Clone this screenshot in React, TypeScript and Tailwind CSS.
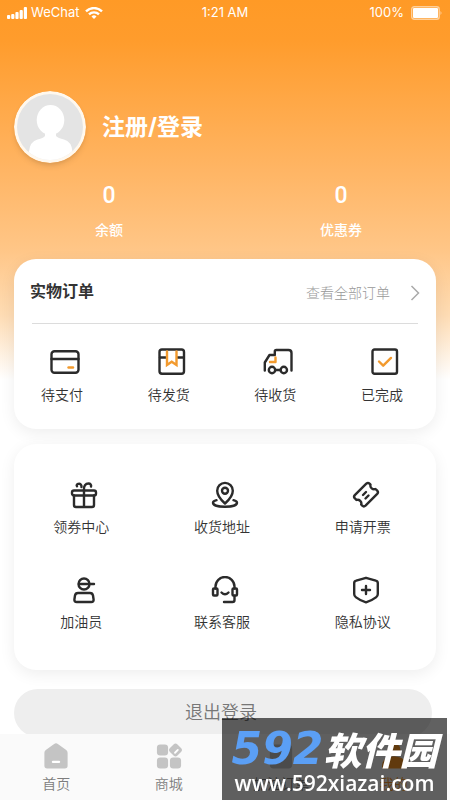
import type { ReactNode } from "react";

type Item = { label: string; icon: ReactNode };

function Svg({ children, size = 28 }: { children: ReactNode; size?: number }) {
  return (
    <svg
      width={size}
      height={size}
      viewBox={`0 0 ${size} ${size}`}
      fill="none"
      stroke="#2b2b2b"
      strokeWidth="2.4"
      strokeLinecap="round"
      strokeLinejoin="round"
      aria-hidden="true"
    >
      {children}
    </svg>
  );
}

const orders: Item[] = [
  {
    label: "待支付",
    icon: (
      <Svg size={30}>
        <rect x="1.5" y="4.2" width="27" height="21.5" rx="3" />
        <path d="M1.5 12h27" />
        <path d="M18.5 20.5h4.5" stroke="#f29a2e" />
      </Svg>
    ),
  },
  {
    label: "待发货",
    icon: (
      <Svg size={30}>
        <rect x="2.5" y="2.5" width="24.5" height="24.2" rx="2.5" />
        <path d="M3 10.500h6M20.500 10.500h6" />
        <path d="M10 4.500v13.500l4.700-3.300 4.800 3.300V4.500" stroke="#f29a2e" strokeLinejoin="miter" />
      </Svg>
    ),
  },
  {
    label: "待收货",
    icon: (
      <Svg size={30}>
        <path d="M1.800 23.500v-8L6.500 8h5.300V4.500q0-1.500 1.500-1.500h12.200q3 0 3 3v17.500" />
        <path d="M12.500 10.500v4.500H7" stroke="#f29a2e" />
        <circle cx="9" cy="23" r="3.200" />
        <circle cx="20.800" cy="23" r="3.200" />
        <path d="M12.500 23h5" />
      </Svg>
    ),
  },
  {
    label: "已完成",
    icon: (
      <Svg size={30}>
        <rect x="2.500" y="2.500" width="24.500" height="24.200" rx="2" />
        <path d="m9 14.500 4.200 4.200 7.800-7.800" stroke="#f29a2e" />
      </Svg>
    ),
  },
];

const services: Item[] = [
  {
    label: "领券中心",
    icon: (
      <Svg>
        <rect x="2" y="9.500" width="24" height="5" rx="2" />
        <path d="M4 14.500v9.500q0 2 2 2h16q2 0 2-2v-9.500M14 9.500V26M14 9c-.5-4 1.500-6.500 4.500-6.500 2 0 3 1.500 2.500 3M11.500 6c.2-2-1.200-3.500-2.800-3.300C7 2.800 6.200 4.200 7 5.300" />
      </Svg>
    ),
  },
  {
    label: "收货地址",
    icon: (
      <Svg>
        <path d="M14 22.500C9.500 18.500 6.200 14.500 6.200 9.700a7.800 7.800 0 0 1 15.600 0c0 4.800-3.300 8.800-7.800 12.800Z" />
        <circle cx="14" cy="9.700" r="3" />
        <path d="M5.500 19.200C3.300 19.800 2 20.700 2 21.800c0 2.300 5 4 12 4s12-1.700 12-4c0-1.100-1.300-2-3.500-2.600" />
      </Svg>
    ),
  },
  {
    label: "申请开票",
    icon: (
      <Svg>
        <path d="M14.300 2.700q1.700-1.500 3.200 0l1 1c-.8 2.800 2.300 5.500 5 4.300l1.700 1.700q1.500 1.500 0 3.200L13.500 24.700q-1.700 1.500-3.200 0L9.200 23.500c.9-2.700-2-5.700-4.800-4.500l-1.600-1.700q-1.500-1.500 0-3.200Z" />
        <path d="m11 14 3-3M13.500 17.500l3-3" />
      </Svg>
    ),
  },
  {
    label: "加油员",
    icon: (
      <Svg>
        <circle cx="14" cy="8" r="5.500" />
        <path d="M9 8h15" />
        <path d="M8 17h12q2.500 0 3 2.500l.6 4q.2 2.500-2.300 2.500H6.700q-2.500 0-2.300-2.500l.6-4q.5-2.500 3-2.500Z" />
      </Svg>
    ),
  },
  {
    label: "联系客服",
    icon: (
      <Svg>
        <path d="M4.500 12.500V10.500a9.500 9.500 0 0 1 19 0v2" />
        <rect x="2" y="12.500" width="4.500" height="7" rx="1" />
        <rect x="21.500" y="12.500" width="4.500" height="7" rx="1" />
        <path d="M10.500 16.500q3.500 3.500 7 0M23.500 20v4q0 2-2 2H13" />
      </Svg>
    ),
  },
  {
    label: "隐私协议",
    icon: (
      <Svg>
        <path d="m14 1.800 9.800 2.800q2 .5 2 2.500v11q0 2-1.500 3-4.500 3.500-10.300 5.200-5.800-1.700-10.300-5.200-1.500-1-1.500-3v-11q0-2 2-2.500Z" />
        <path d="M14 10v8M10 14h8" />
      </Svg>
    ),
  },
];

const tabs = [
  {
    label: "首页",
    color: "text-[#7d7d7d]",
    icon: (
      <>
        <path d="M12 1.500q2-1.500 4 0l9 6.500q1.500 1 1.500 3v14q0 3-3 3h-19q-3 0-3-3V11q0-2 1.500-3Z" fill="#c4c4c4" />
        <rect x="9.500" y="19.500" width="9" height="2.600" rx="1.200" fill="#fff" />
      </>
    ),
  },
  {
    label: "商城",
    color: "text-[#7d7d7d]",
    icon: (
      <g fill="#c4c4c4">
        <rect x="1" y="2" width="12" height="12" rx="3.500" />
        <rect x="1" y="16" width="12" height="12" rx="3.500" />
        <rect x="15" y="16" width="12" height="12" rx="3.500" />
        <rect x="15.300" y="2.300" width="11.400" height="11.400" rx="3" transform="rotate(45 21 8)" />
        <path d="m20.500 11 3-3" stroke="#fff" strokeWidth="2" strokeLinecap="round" />
      </g>
    ),
  },
  {
    label: "加油订单",
    color: "text-[#7d7d7d]",
    icon: <rect x="2" y="2" width="24" height="26" rx="4" fill="#c4c4c4" />,
  },
  {
    label: "我的",
    color: "text-[#ff9a26]",
    icon: (
      <g fill="#ff9a26">
        <circle cx="14" cy="8" r="7" />
        <path d="M3 28q-2 0-2-2c0-7 4-11 13-11s13 4 13 11q0 2-2 2Z" />
      </g>
    ),
  },
];

function Entry({ item }: { item: Item }) {
  return (
    <button type="button" className="flex flex-col items-center">
      {item.icon}
      <span className="pt-2 pr-1.5 text-sm leading-5 font-[350] text-[#333]">{item.label}</span>
    </button>
  );
}

function StatusBar() {
  return (
    <header className="grid h-[26px] grid-cols-3 items-center px-[7px] text-[13px] text-white">
      <div className="flex items-center gap-1">
        <svg width="20" height="12" viewBox="0 0 20 12" fill="#fff" aria-hidden="true">
          <rect x="0" y="8" width="3.200" height="4" rx="1" />
          <rect x="4.200" y="7" width="3.200" height="5" rx="1" />
          <rect x="8.400" y="5" width="3.200" height="7" rx="1" />
          <rect x="12.600" y="3" width="3.200" height="9" rx="1" />
          <rect x="16.800" y="0" width="3.200" height="12" rx="1" />
        </svg>
        <span>WeChat</span>
        <svg className="ml-0.5" width="18" height="12" viewBox="0 0 18 12" fill="none" stroke="#fff" strokeWidth="2.400" aria-hidden="true">
          <path d="M1 4.300a11.500 11.500 0 0 1 16 0M4 7.400a7.200 7.200 0 0 1 10 0" />
          <path d="M6.500 9.500a3.700 3.700 0 0 1 5 0L9 12Z" fill="#fff" stroke="none" />
        </svg>
      </div>
      <span className="text-center">1:21 AM</span>
      <div className="flex items-center justify-end gap-[7px]">
        <span>100%</span>
        <svg width="32" height="14" viewBox="0 0 32 14" aria-hidden="true">
          <rect x=".7" y=".7" width="27.500" height="12.600" rx="2.500" fill="none" stroke="#ffd09a" strokeWidth="1.400" />
          <rect x="2" y="2" width="25" height="10" rx="1" fill="#fff" />
          <path d="M29.500 5q2 2 0 4Z" fill="#ffd09a" />
        </svg>
      </div>
    </header>
  );
}

function Avatar() {
  return (
    <svg className="rounded-full shadow-md" width="72" height="72" viewBox="0 0 72 72" aria-hidden="true">
      <defs>
        <clipPath id="face">
          <circle cx="36" cy="36" r="33" />
        </clipPath>
      </defs>
      <circle cx="36" cy="36" r="36" fill="#fff8ee" />
      <g clipPath="url(#face)">
        <path d="M0 0h72v72H0z" fill="#e4e4e4" />
        <path d="M31 38h11v7q2 2 8 3.500 7.500 2 8.500 12V72H15V60.500q1-10 8.500-12 6-1.500 7.500-3.500Z" fill="#fff" />
        <ellipse cx="36.500" cy="29" rx="13.800" ry="15" fill="#fff" />
      </g>
    </svg>
  );
}

function Stat({ value, label }: { value: string; label: string }) {
  return (
    <div className="flex flex-col items-center">
      <span className="font-[Roboto] text-[23px] leading-[30px] font-medium">{value}</span>
      <span className="mt-[7px] text-sm leading-6 font-medium">{label}</span>
    </div>
  );
}

export default function App() {
  return (
    <div className="min-h-screen overflow-hidden bg-[linear-gradient(#ff9a26_0px,#ff9c2c_40px,#ffb564_170px,#ffc687_250px,#fedcb4_315px,#ffffff_380px)] pb-16 font-[Inter,'Noto_Sans_CJK_SC',sans-serif]">
      <StatusBar />

      <section className="px-3.5 pt-[65px] text-white">
        <a href="#login" className="flex items-center gap-4">
          <Avatar />
          <span className="text-[23px] font-bold">注册/登录</span>
        </a>
        <div className="mt-[18px] flex justify-between pr-[74px] pl-[81px]">
          <Stat value="0" label="余额" />
          <Stat value="0" label="优惠券" />
        </div>
      </section>

      <main className="px-3.5 pt-[17px]">
        <section className="rounded-[22px] bg-white px-4 pb-6 shadow-[0_4px_16px_rgba(0,0,0,0.07)]">
          <div className="flex h-16 items-center justify-between">
            <h2 className="text-base font-bold text-[#333]">实物订单</h2>
            <a href="#orders" className="flex items-center gap-5 pt-1 text-sm font-light text-[#999]">
              查看全部订单
              <svg width="10" height="16" viewBox="0 0 10 16" fill="none" stroke="#aaa" strokeWidth="1.500" aria-hidden="true">
                <path d="m1.500 1 7 7-7 7" />
              </svg>
            </a>
          </div>
          <hr className="mx-0.5 border-[#dcdcdc]" />
          <div className="flex justify-between px-[11px] pt-[23px]">
            {orders.map((item) => (
              <Entry key={item.label} item={item} />
            ))}
          </div>
        </section>

        <section className="mt-[15px] grid grid-cols-3 gap-y-[39px] rounded-[22px] bg-white pt-[37px] pb-[38px] shadow-[0_4px_16px_rgba(0,0,0,0.07)]">
          {services.map((item) => (
            <Entry key={item.label} item={item} />
          ))}
        </section>

        <div className="mt-[19px] pr-1">
          <button type="button" className="h-12 w-full rounded-full bg-[#eee] pr-1 text-lg font-[350] text-[#777]">
            退出登录
          </button>
        </div>
      </main>

      <nav className="fixed inset-x-0 bottom-0 grid h-[66px] grid-cols-4 bg-[#fafafa]">
        {tabs.map((tab) => (
          <a
            key={tab.label}
            href="#tab"
            className={`flex flex-col items-center gap-1 pt-2 text-sm leading-5 font-[350] ${tab.color}`}
          >
            <svg width="26" height="28" viewBox="0 0 28 29" aria-hidden="true">
              {tab.icon}
            </svg>
            {tab.label}
          </a>
        ))}
      </nav>

      <aside className="fixed right-[3px] bottom-0 flex h-[82px] w-[225px] flex-col items-center bg-black/62 pt-2 text-white">
        <div className="flex h-[45px] items-center leading-none font-bold whitespace-nowrap italic">
          <span className="font-['DejaVu_Sans'] text-[44px] text-[#5b9ff5]">592</span>
          <span className="font-['Noto_Sans_CJK_SC'] text-[38px] font-black">软件园</span>
        </div>
        <span className="font-['Open_Sans'] text-[21px] leading-6 font-semibold">www.592xiazai.com</span>
      </aside>
    </div>
  );
}
